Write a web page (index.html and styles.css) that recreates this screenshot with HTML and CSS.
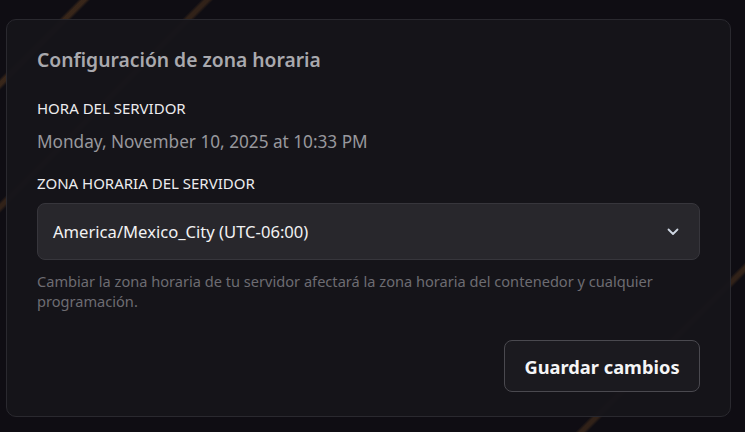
FILE: index.html
```html
<!DOCTYPE html>
<html lang="es">
<head>
    <meta charset="UTF-8">
    <meta name="viewport" content="width=device-width, initial-scale=1.0">
    <title>Configuración de zona horaria</title>
    <link rel="stylesheet" href="styles.css">
</head>
<body>
    <div class="card">
        <h2 class="card-title">Configuración de zona horaria</h2>

        <p class="field-label">Hora del servidor</p>
        <p class="server-time">Monday, November 10, 2025 at 10:33 PM</p>

        <p class="field-label field-label--spaced">Zona horaria del servidor</p>
        <div class="select">
            <span class="select-value">America/Mexico_City (UTC-06:00)</span>
            <svg class="select-chevron" width="12" height="8" viewBox="0 0 12 8" aria-hidden="true">
                <path d="M1.5 1.5 L6 6 L10.5 1.5" fill="none" stroke="currentColor" stroke-width="1.8" stroke-linecap="round" stroke-linejoin="round"/>
            </svg>
        </div>
        <p class="help-text">Cambiar la zona horaria de tu servidor afectará la zona horaria del contenedor y cualquier programación.</p>

        <div class="actions">
            <button class="btn-save">Guardar cambios</button>
        </div>
    </div>
</body>
</html>
```

FILE: styles.css
```css
/* Reset default margin and padding */
body, h2, p {
    margin: 0;
    padding: 0;
}

html, body {
    height: 100%;
}

/* Dark page with a few faint diagonal streaks */
body {
    font-family: "Noto Sans", "Open Sans", sans-serif;
    color: #e8e8ea;
    background-color: #0f0d13;
    background-image: linear-gradient(135deg,
        transparent 55px,
        rgba(150, 95, 40, 0.3) 58px,
        rgba(150, 95, 40, 0.3) 61px,
        transparent 64px,
        transparent 142px,
        rgba(150, 95, 40, 0.25) 145px,
        rgba(150, 95, 40, 0.25) 148px,
        transparent 151px,
        transparent 712px,
        rgba(150, 95, 40, 0.25) 715px,
        rgba(150, 95, 40, 0.25) 718px,
        transparent 721px);
    padding: 19px 14px 15px 6px;
    box-sizing: border-box;
    overflow: hidden;
}

/* Main settings card */
.card {
    background-color: rgba(22, 21, 26, 0.96);
    border: 1px solid #2a292f;
    border-radius: 10px;
    padding: 28px 30px 24px 30px;
    height: 100%;
    box-sizing: border-box;
}

.card-title {
    font-size: 19.3px;
    line-height: 24px;
    font-weight: 600;
    color: #a9a9ae;
    margin-bottom: 26px;
}

.field-label {
    font-size: 15px;
    line-height: 20px;
    text-transform: uppercase;
    color: #ececee;
    margin-bottom: 12px;
}

.field-label--spaced {
    margin-top: 19px;
    margin-bottom: 10px;
}

.server-time {
    font-size: 17.2px;
    line-height: 24px;
    color: #98989d;
}

/* Fake select box */
.select {
    display: flex;
    align-items: center;
    justify-content: space-between;
    height: 57px;
    box-sizing: border-box;
    padding: 0 20px 0 15px;
    background-color: #28272c;
    border: 1px solid #37363c;
    border-radius: 8px;
}

.select-value {
    font-size: 16.6px;
    color: #f2f2f3;
}

.select-chevron {
    color: #cfd6e2;
}

.help-text {
    font-size: 14.6px;
    line-height: 20px;
    color: #6d6c72;
    margin-top: 11px;
}

.actions {
    display: flex;
    justify-content: flex-end;
    margin-top: 29px;
}

.btn-save {
    font-family: inherit;
    font-size: 18.3px;
    font-weight: 700;
    color: #f5f5f6;
    background-color: #1b1a1f;
    border: 1px solid #4a494f;
    border-radius: 8px;
    width: 196px;
    height: 52px;
    cursor: pointer;
}
```
